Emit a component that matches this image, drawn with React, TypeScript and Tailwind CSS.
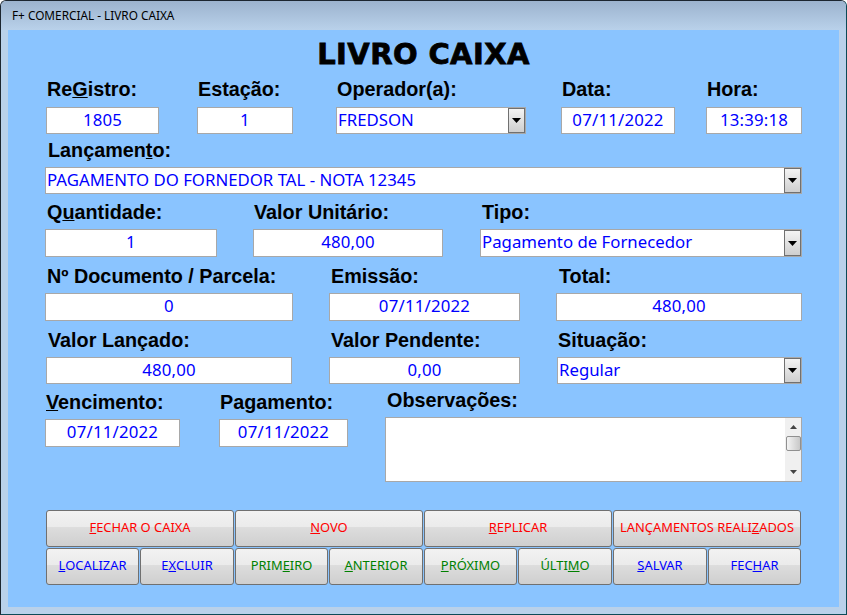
import type { ReactNode } from "react";

const sans = "font-['Noto_Sans','Open_Sans',sans-serif]";

const Arrow = () => (
  <svg width="9" height="5" viewBox="0 0 9 5">
    <path d="M0 0h9L4.5 5z" fill="#000" />
  </svg>
);

const SmallArrow = () => (
  <svg width="7" height="4" viewBox="0 0 7 4">
    <path d="M0 0h7L3.5 4z" fill="#444" />
  </svg>
);

const Field = ({ label, className, up, children }: { label: ReactNode; className: string; up?: boolean; children: ReactNode }) => (
  <div className={`flex flex-col ${className}`}>
    <div className={`h-[28px] whitespace-nowrap font-['Liberation_Sans',sans-serif] text-[19.8px] font-bold text-black ${up ? "leading-[20px]" : "leading-[22px]"}`}>
      {label}
    </div>
    {children}
  </div>
);

const Box = ({ children, h = "h-[27px]" }: { children: ReactNode; h?: string }) => (
  <div className={`${h} ${sans} flex items-center justify-center border border-[#a8a8a8] bg-white pb-[2px] text-[16.8px] tracking-[0.2px] text-[#0000ff]`}>
    {children}
  </div>
);

const Combo = ({ children, h = "h-[27px]" }: { children: ReactNode; h?: string }) => (
  <div className={`${h} ${sans} flex items-center border border-[#a8a8a8] bg-white pl-[1px] text-[16.8px] text-[#0000ff]`}>
    <span className="flex-1 whitespace-nowrap pb-[2px]">{children}</span>
    <span className="flex h-full w-[17px] items-center justify-center border border-[#707070] bg-gradient-to-b from-[#f4f4f4] to-[#cfcfcf]">
      <Arrow />
    </span>
  </div>
);

const Btn = ({ color, children }: { color: string; children: ReactNode }) => (
  <button className={`${color} ${sans} flex h-[37px] items-center justify-center whitespace-nowrap rounded-[3px] border border-[#707070] bg-[linear-gradient(#f2f2f2_0%,#ebebeb_45%,#dddddd_46%,#cfcfcf_100%)] pb-[2px] text-[12.9px]`}>
    {children}
  </button>
);

const App = () => {
  return (
    <div className="flex h-[615px] w-[847px] flex-col overflow-hidden rounded-t-[6px] border border-[#1c2630] border-b-[#0c4a56] border-r-[#0c4a56] bg-[#b9d1ea]">
      <div className="flex h-[29px] shrink-0 items-center bg-gradient-to-b from-[#9cb3ce] to-[#b9d1ea] pl-[11px] font-['Noto_Sans',sans-serif] text-[11.8px] text-black">
        F+ COMERCIAL - LIVRO CAIXA
      </div>
      <div className="mx-[7px] mb-[7px] flex-1 bg-[#8ac4ff] pl-[37px]">
        <h1 className="h-[49px] pr-[37px] pt-[5px] text-center font-['DejaVu_Sans',sans-serif] text-[29px] font-bold leading-[38px] tracking-[0.4px] text-black [-webkit-text-stroke:0.8px_black]">
          LIVRO CAIXA
        </h1>

        <div className="flex">
          <Field up className="ml-[1px] w-[113px]" label={<span className="ml-[1px]">Re<u>G</u>istro:</span>}><Box>1805</Box></Field>
          <Field up className="ml-[38px] w-[96px]" label={<span className="ml-[1px]">Estação:</span>}><Box>1</Box></Field>
          <Field up className="ml-[43px] w-[190px]" label={<span className="ml-[1px]">Operador(a):</span>}><Combo>FREDSON</Combo></Field>
          <Field up className="ml-[35px] w-[114px]" label={<span className="ml-[1px]">Data:</span>}><Box>07/11/2022</Box></Field>
          <Field up className="ml-[31px] w-[96px]" label={<span className="ml-[1px]">Hora:</span>}><Box>13:39:18</Box></Field>
        </div>

        <Field className="mt-[5px] w-[757px]" label={<span className="ml-[3px]">Lançamen<u>t</u>o:</span>}>
          <Combo>PAGAMENTO DO FORNEDOR TAL - NOTA 12345</Combo>
        </Field>

        <div className="mt-[7px] flex">
          <Field className="w-[172px]" label={<span className="ml-[2px]">Q<u>u</u>antidade:</span>}><Box h="h-[28px]">1</Box></Field>
          <Field className="ml-[36px] w-[190px]" label={<span className="ml-[1px]">Valor Unitário:</span>}><Box h="h-[28px]">480,00</Box></Field>
          <Field className="ml-[37px] w-[322px]" label={<span className="ml-[2px]">Tipo:</span>}><Combo h="h-[28px]">Pagamento de Fornecedor</Combo></Field>
        </div>

        <div className="mt-[8px] flex">
          <Field className="w-[248px]" label={<span className="ml-[2px]">Nº Documento / Parcela:</span>}><Box h="h-[28px]">0</Box></Field>
          <Field className="ml-[36px] w-[191px]" label={<span className="ml-[2px]">Emissão:</span>}><Box h="h-[28px]">07/11/2022</Box></Field>
          <Field className="ml-[36px] w-[246px]" label={<span className="ml-[3px]">Total:</span>}><Box h="h-[28px]">480,00</Box></Field>
        </div>

        <div className="mt-[8px] flex">
          <Field className="ml-[1px] w-[246px]" label={<span className="ml-[2px]">Valor Lançado:</span>}><Box>480,00</Box></Field>
          <Field className="ml-[37px] w-[191px]" label={<span className="ml-[2px]">Valor Pendente:</span>}><Box>0,00</Box></Field>
          <Field className="ml-[37px] w-[245px]" label={<span className="ml-[1px]">Situação:</span>}><Combo>Regular</Combo></Field>
        </div>

        <div className="mt-[5px] flex items-start">
          <Field className="mt-[2px] w-[135px]" label={<span className="ml-[1px]"><u>V</u>encimento:</span>}><Box h="h-[28px]">07/11/2022</Box></Field>
          <Field className="ml-[39px] mt-[2px] w-[129px]" label={<span className="ml-[1px]">Pagamento:</span>}><Box h="h-[28px]">07/11/2022</Box></Field>
          <Field className="ml-[37px] w-[417px]" label={<span className="ml-[2px]">Observações:</span>}>
            <div className="flex h-[65px] justify-end border border-[#a8a8a8] bg-white">
              <div className="flex w-[16px] flex-col items-center bg-[#f0f0f0] pt-[7px]">
                <span className="flex h-[4px] rotate-180"><SmallArrow /></span>
                <span className="mt-[7px] h-[15px] w-[15px] rounded-[2px] border border-[#909090] bg-gradient-to-r from-[#f4f4f4] to-[#c8c8c8]" />
                <span className="mt-[19px] flex h-[4px]"><SmallArrow /></span>
              </div>
            </div>
          </Field>
        </div>

        <div className="ml-[1px] mt-[28px] grid w-[755px] grid-cols-4 gap-[1px]">
          <Btn color="text-[#ff0000]"><u>F</u>ECHAR O CAIXA</Btn>
          <Btn color="text-[#ff0000]"><u>N</u>OVO</Btn>
          <Btn color="text-[#ff0000]"><u>R</u>EPLICAR</Btn>
          <Btn color="text-[#ff0000]">LANÇAMENTOS REALI<u>Z</u>ADOS</Btn>
        </div>
        <div className="ml-[1px] mt-[1px] grid w-[755px] grid-cols-[93px_94px_93px_94px_93px_94px_94px_93px] gap-[1px]">
          <Btn color="text-[#0000ff]"><u>L</u>OCALIZAR</Btn>
          <Btn color="text-[#0000ff]">E<u>X</u>CLUIR</Btn>
          <Btn color="text-[#008000]">PRIM<u>E</u>IRO</Btn>
          <Btn color="text-[#008000]"><u>A</u>NTERIOR</Btn>
          <Btn color="text-[#008000]"><u>P</u>RÓXIMO</Btn>
          <Btn color="text-[#008000]">ÚLTI<u>M</u>O</Btn>
          <Btn color="text-[#0000ff]"><u>S</u>ALVAR</Btn>
          <Btn color="text-[#0000ff]">FEC<u>H</u>AR</Btn>
        </div>
      </div>
    </div>
  );
};

export default App;
